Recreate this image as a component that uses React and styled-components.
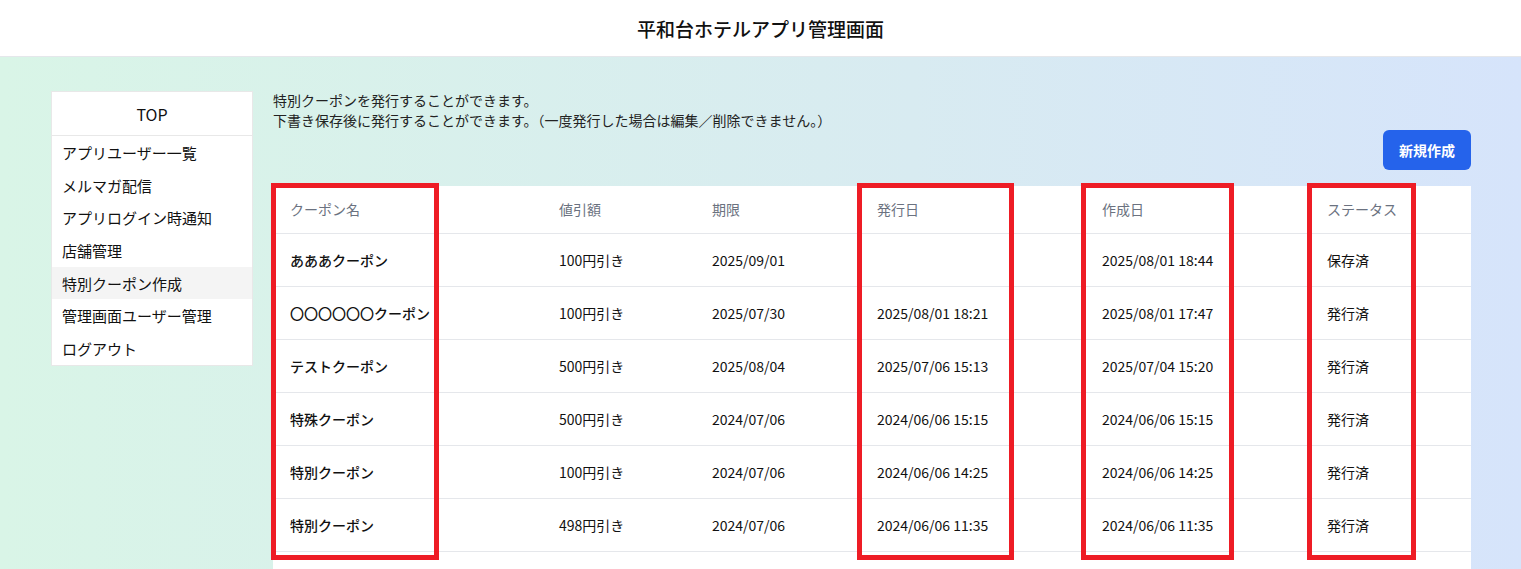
import React from "react";
import styled, { createGlobalStyle } from "styled-components";

const GlobalStyle = createGlobalStyle`
  html, body { margin: 0; padding: 0; }
  body {
    font-family: "Noto Sans CJK JP", "Noto Sans", sans-serif;
    color: #1f2937;
    background: #fff;
  }
  * { box-sizing: border-box; }
`;

const Header = styled.header`
  height: 57px;
  background: #fff;
  border-bottom: 1px solid #e5e7eb;
  display: flex;
  align-items: center;
  justify-content: center;
`;

const Title = styled.h1`
  margin: 0;
  font-size: 19px;
  font-weight: 500;
  color: #111;
  letter-spacing: 0;
`;

const Page = styled.div`
  min-height: 512px;
  background: linear-gradient(to right, #d9f5e7 0%, #d8ebf1 60%, #d6e4fb 100%);
  padding: 34px 50px 0 51px;
  display: flex;
  align-items: flex-start;
  gap: 20px;
`;

const Sidebar = styled.nav`
  width: 202px;
  flex: none;
  background: #fff;
  border: 1px solid #e8e8e8;
`;

const SideTop = styled.div`
  height: 44px;
  display: flex;
  align-items: center;
  justify-content: center;
  font-size: 16px;
  color: #111;
  border-bottom: 1px solid #e8e8e8;
`;

const SideList = styled.ul`
  list-style: none;
  margin: 0;
  padding: 0;
`;

const SideItem = styled.li`
  height: 32.7px;
  display: flex;
  align-items: center;
  padding-left: 10px;
  font-size: 15px;
  color: #111;
  background: ${(p) => (p.$active ? "#f4f4f4" : "transparent")};
`;

const Main = styled.main`
  flex: 1;
  min-width: 0;
`;

const Description = styled.p`
  margin: 0;
  font-size: 14px;
  line-height: 19.5px;
  color: #222;
`;

const ButtonRow = styled.div`
  display: flex;
  justify-content: flex-end;
`;

const PrimaryButton = styled.button`
  height: 40px;
  padding: 0 16px;
  border: none;
  border-radius: 6px;
  background: #2563eb;
  color: #fff;
  font-family: inherit;
  font-size: 14px;
  font-weight: 700;
  cursor: pointer;
`;

const TableWrap = styled.div`
  position: relative;
  margin-top: 16px;
  background: #fff;
  padding-bottom: 24px;
`;

const Table = styled.table`
  width: 100%;
  table-layout: fixed;
  border-collapse: collapse;
  font-size: 14px;
`;

const Th = styled.th`
  height: 47px;
  padding: 0 17px;
  text-align: left;
  font-weight: 400;
  color: #6b7280;
  border-bottom: 1px solid #e5e7eb;
`;

const Td = styled.td`
  height: 53px;
  padding: 0 17px;
  color: #111;
  font-weight: ${(p) => (p.$strong ? 500 : 400)};
  border-bottom: 1px solid #e5e7eb;
  white-space: nowrap;
`;

const Highlight = styled.div`
  position: absolute;
  top: -3px;
  height: 377px;
  border: 5px solid #ee1c25;
  pointer-events: none;
`;

const columns = [
  { label: "クーポン名", width: 269 },
  { label: "値引額", width: 153 },
  { label: "期限", width: 165 },
  { label: "発行日", width: 225 },
  { label: "作成日", width: 225 },
  { label: "ステータス", width: 161 },
];

const rows = [
  ["あああクーポン", "100円引き", "2025/09/01", "", "2025/08/01 18:44", "保存済"],
  ["〇〇〇〇〇〇クーポン", "100円引き", "2025/07/30", "2025/08/01 18:21", "2025/08/01 17:47", "発行済"],
  ["テストクーポン", "500円引き", "2025/08/04", "2025/07/06 15:13", "2025/07/04 15:20", "発行済"],
  ["特殊クーポン", "500円引き", "2024/07/06", "2024/06/06 15:15", "2024/06/06 15:15", "発行済"],
  ["特別クーポン", "100円引き", "2024/07/06", "2024/06/06 14:25", "2024/06/06 14:25", "発行済"],
  ["特別クーポン", "498円引き", "2024/07/06", "2024/06/06 11:35", "2024/06/06 11:35", "発行済"],
];

const highlights = [
  { left: -2, width: 168 },
  { left: 584, width: 157 },
  { left: 808, width: 153 },
  { left: 1034, width: 109 },
];

const menu = [
  "アプリユーザー一覧",
  "メルマガ配信",
  "アプリログイン時通知",
  "店舗管理",
  "特別クーポン作成",
  "管理画面ユーザー管理",
  "ログアウト",
];

export default function App() {
  return (
    <>
      <GlobalStyle />
      <Header>
        <Title>平和台ホテルアプリ管理画面</Title>
      </Header>
      <Page>
        <Sidebar>
          <SideTop>TOP</SideTop>
          <SideList>
            {menu.map((m) => (
              <SideItem key={m} $active={m === "特別クーポン作成"}>
                {m}
              </SideItem>
            ))}
          </SideList>
        </Sidebar>
        <Main>
          <Description>
            特別クーポンを発行することができます。
            <br />
            下書き保存後に発行することができます。（一度発行した場合は編集／削除できません。）
          </Description>
          <ButtonRow>
            <PrimaryButton>新規作成</PrimaryButton>
          </ButtonRow>
          <TableWrap>
            <Table>
              <colgroup>
                {columns.map((c) => (
                  <col key={c.label} style={{ width: c.width }} />
                ))}
              </colgroup>
              <thead>
                <tr>
                  {columns.map((c) => (
                    <Th key={c.label}>{c.label}</Th>
                  ))}
                </tr>
              </thead>
              <tbody>
                {rows.map((r, i) => (
                  <tr key={i}>
                    {r.map((cell, j) => (
                      <Td key={j} $strong={j === 0}>
                        {cell}
                      </Td>
                    ))}
                  </tr>
                ))}
              </tbody>
            </Table>
            {highlights.map((h, i) => (
              <Highlight key={i} style={{ left: h.left, width: h.width }} />
            ))}
          </TableWrap>
        </Main>
      </Page>
    </>
  );
}
